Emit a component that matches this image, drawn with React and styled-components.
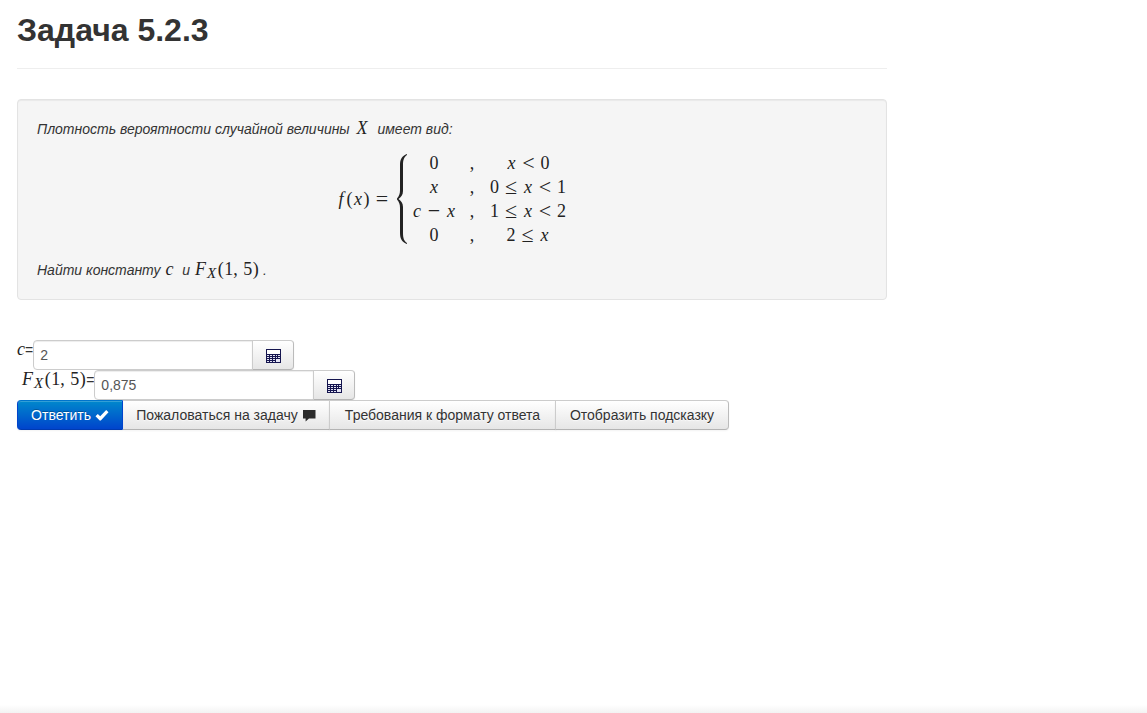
import React from "react";
import styled, { createGlobalStyle, css } from "styled-components";

const GlobalStyle = createGlobalStyle`
  *, *::before, *::after { box-sizing: border-box; }
  body {
    margin: 0;
    background: #fff;
    color: #333;
    font: 14px/20px "Liberation Sans", Arial, sans-serif;
  }
`;

const Page = styled.div`
  min-height: 100vh;
  display: flex;
  flex-direction: column;
`;

const Content = styled.main`
  flex: 1;
  width: 100%;
  max-width: 904px;
  padding: 10px 17px 20px;
`;

const Header = styled.header`
  padding-bottom: 18px;
  margin-bottom: 30px;
  border-bottom: 1px solid #eee;
`;

const Title = styled.h1`
  margin: 0;
  font-size: 32px;
  line-height: 40px;
  font-weight: bold;
`;

const Well = styled.section`
  padding: 19px;
  margin-bottom: 40px;
  background: #f5f5f5;
  border: 1px solid #e3e3e3;
  border-radius: 4px;
  box-shadow: inset 0 1px 1px rgba(0, 0, 0, 0.05);
`;

const Statement = styled.p`
  margin: 0;
  height: 20px;
  font-style: italic;
  white-space: nowrap;
`;

const MathText = styled.span`
  display: inline-block;
  color: #222;
  font-family: "Liberation Serif", "Times New Roman", serif;
  font-size: 18px;
  line-height: 18px;
  font-style: normal;
  white-space: nowrap;
  margin-left: ${(p) => p.$before || 0}px;
  margin-right: ${(p) => p.$after || 0}px;
`;

const Variable = styled.i`
  display: inline-block;
  min-width: 10px;
  text-align: center;
`;

const Capital = styled(Variable)`
  min-width: 13px;
`;

const Paren = styled.span`
  display: inline-block;
  min-width: 7px;
  text-align: center;
`;

const Comma = styled.span`
  margin-right: 1px;
`;

const Subscript = styled.sub`
  font-size: 15px;
  line-height: 0;
  vertical-align: -3px;
  font-style: italic;
  margin-right: 1px;
`;

const Relation = styled.span`
  display: inline-block;
  width: 14px;
  margin: 0 5px;
  font-size: 22px;
  line-height: 16px;
  text-align: center;
  vertical-align: -1px;
`;

const Formula = styled.div`
  display: flex;
  justify-content: center;
  align-items: center;
  padding: 12px 0 13px;
`;

const Brace = styled.svg`
  width: 10px;
  height: 90px;
  margin: 0 5px 0 3px;
`;

const Cases = styled.div`
  display: grid;
  grid-template-columns: 44px 4px 80px;
  column-gap: 14px;
  grid-auto-rows: 24px;
  justify-items: center;
  align-items: center;
`;

const Answer = styled.div`
  display: flex;
  align-items: flex-start;
`;

const Label = styled.label`
  white-space: nowrap;
`;

const control = css`
  height: 30px;
  border: 1px solid #ccc;
  font: inherit;
`;

const Field = styled.input`
  ${control}
  width: 220px;
  padding: 4px 6px;
  color: #555;
  background: #fff;
  border-radius: 4px 0 0 4px;
  box-shadow: inset 0 1px 1px rgba(0, 0, 0, 0.075);
`;

const Button = styled.button`
  ${control}
  display: inline-flex;
  align-items: center;
  justify-content: center;
  gap: 4px;
  margin: 0 0 0 -1px;
  padding: 4px 12px;
  white-space: nowrap;
  cursor: pointer;
  color: #333;
  text-shadow: 0 1px 1px rgba(255, 255, 255, 0.75);
  background: linear-gradient(#fff, #e6e6e6);
  border-color: #ccc #bbb #b3b3b3 #ccc;
  box-shadow: inset 0 1px 0 rgba(255, 255, 255, 0.2), 0 1px 2px rgba(0, 0, 0, 0.05);

  &:first-child { margin-left: 0; border-radius: 4px 0 0 4px; }
  &:last-child { border-radius: 0 4px 4px 0; }

  ${(p) =>
    p.$primary &&
    css`
      color: #fff;
      text-shadow: 0 -1px 0 rgba(0, 0, 0, 0.25);
      background: linear-gradient(#0088cc, #0044cc);
      border-color: #0074cc #0044cc #003ab0;
    `}
`;

const CalculatorButton = styled(Button)`
  width: 42px;
`;

const Actions = styled.div`
  display: grid;
  grid-template-columns: 106px 207px 226px 173px;

  ${Button}:first-child { z-index: 1; }
  ${Button}:nth-child(2) { margin-left: 0; border-left-width: 0; }
`;

const BottomShade = styled.footer`
  height: 8px;
  background: linear-gradient(#fff, #f3f3f3);
`;

function CalculatorIcon() {
  return (
    <svg width="16" height="16" viewBox="0 0 16 16" shapeRendering="crispEdges" aria-hidden="true">
      <path fill="#15154f" d="M1 2h15v14H1z" />
      <path fill="#fff" d="M2 3h13v4H2z" />
      <path
        fill="#e4e4f4"
        d="M2 8h2v1H2zM5 8h2v1H5zM8 8h2v1H8zM11 8h1v1h-1zM13 8h2v1h-2zM2 10h2v1H2zM5 10h2v1H5zM8 10h2v1H8zM11 10h1v1h-1zM13 10h2v1h-2zM2 12h2v1H2zM5 12h2v1H5zM8 12h2v1H8zM11 12h4v3h-4zM2 14h2v1H2zM5 14h2v1H5zM8 14h2v1H8z"
      />
    </svg>
  );
}

function CheckIcon() {
  return (
    <svg width="14" height="14" viewBox="0 0 14 14" aria-hidden="true">
      <path fill="#fff" d="M0.500 8.200L2.800 6l2.400 2.200L11.200 2l2.300 2.200L5.800 12.500H4.700z" />
    </svg>
  );
}

function CommentIcon() {
  return (
    <svg width="14" height="14" viewBox="0 0 14 14" aria-hidden="true">
      <path fill="#2b2b2b" d="M1 2h12.500v8.500H7L3.600 13.500v-3H1z" />
    </svg>
  );
}

function Distribution() {
  return (
    <>
      <Capital>F</Capital>
      <Subscript>X</Subscript>
      <Paren>(</Paren>1<Comma>,</Comma> 5<Paren>)</Paren>
    </>
  );
}

const X = () => <Variable>x</Variable>;

const cases = [
  ["0", <><X /><Relation>&lt;</Relation>0</>],
  [<X />, <>0<Relation>≤</Relation><X /><Relation>&lt;</Relation>1</>],
  [<><Variable>c</Variable><Relation>−</Relation><X /></>, <>1<Relation>≤</Relation><X /><Relation>&lt;</Relation>2</>],
  ["0", <>2<Relation>≤</Relation><X /></>],
];

export default function App() {
  return (
    <>
      <GlobalStyle />
      <Page>
        <Content>
          <Header>
            <Title>Задача 5.2.3</Title>
          </Header>
          <Well>
            <Statement>
              Плотность вероятности случайной величины{" "}
              <MathText $before={2} $after={5}><Capital>X</Capital></MathText> имеет вид:
            </Statement>
            <Formula>
              <MathText>
                <Variable>f</Variable><Paren>(</Paren><X /><Paren>)</Paren><Relation>=</Relation>
              </MathText>
              <Brace viewBox="0 0 10 90" aria-hidden="true">
                <path
                  fill="#222"
                  d="M10 1C7 3 6 6 6 11v26c0 4-2 6-4.500 8C4 47 6 49 6 53v26c0 5 1 8 4 10v1C5 88 3 85 3 79V54c0-4-1-6-3-8.500v-1C2 42 3 40 3 36V11C3 5 5 2 10 0z"
                />
              </Brace>
              <Cases>
                {cases.map(([value, range], i) => (
                  <React.Fragment key={i}>
                    <MathText>{value}</MathText>
                    <MathText>,</MathText>
                    <MathText>{range}</MathText>
                  </React.Fragment>
                ))}
              </Cases>
            </Formula>
            <Statement>
              Найти константу <MathText $after={4}><Variable>c</Variable></MathText> и{" "}
              <MathText><Distribution /></MathText> .
            </Statement>
          </Well>
          <form onSubmit={(e) => e.preventDefault()}>
            <Answer>
              <Label htmlFor="constant"><MathText><i>c</i></MathText>=</Label>
              <Field id="constant" defaultValue="2" />
              <CalculatorButton type="button" aria-label="Калькулятор"><CalculatorIcon /></CalculatorButton>
            </Answer>
            <Answer>
              <Label htmlFor="distribution"><MathText $before={4}><Distribution /></MathText>=</Label>
              <Field id="distribution" defaultValue="0,875" />
              <CalculatorButton type="button" aria-label="Калькулятор"><CalculatorIcon /></CalculatorButton>
            </Answer>
            <Actions>
              <Button type="submit" $primary>Ответить<CheckIcon /></Button>
              <Button type="button">Пожаловаться на задачу<CommentIcon /></Button>
              <Button type="button">Требования к формату ответа</Button>
              <Button type="button">Отобразить подсказку</Button>
            </Actions>
          </form>
        </Content>
        <BottomShade />
      </Page>
    </>
  );
}
